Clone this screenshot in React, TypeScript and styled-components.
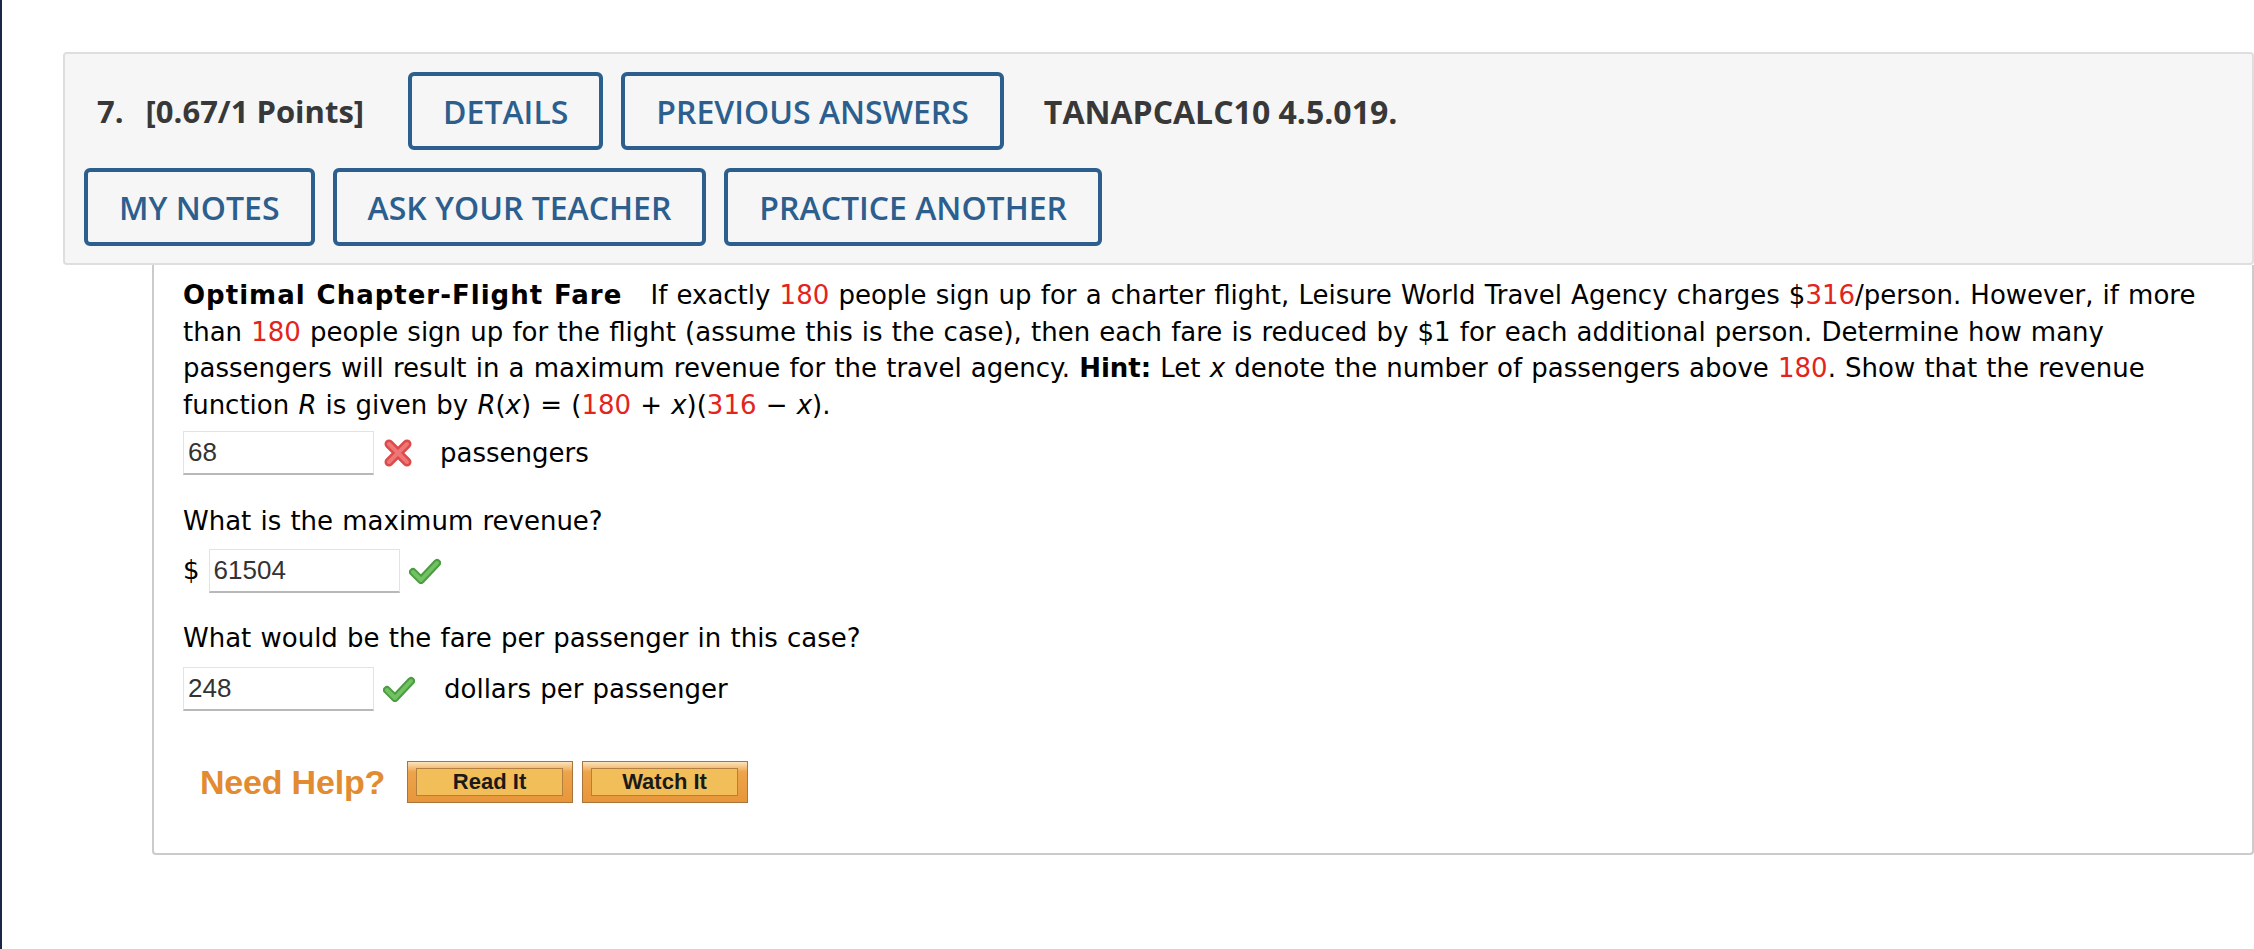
import React from 'react';
import styled, { createGlobalStyle } from 'styled-components';

const GlobalStyle = createGlobalStyle`
  html, body {
    margin: 0;
    padding: 0;
    background: #ffffff;
  }
  * {
    box-sizing: border-box;
  }
`;

const Page = styled.div`
  min-height: 949px;
  border-left: 2px solid #1a2747;
  padding-top: 52px;
  font-family: Verdana, "DejaVu Sans", sans-serif;
`;

const Header = styled.div`
  margin-left: 61px;
  background: #f6f6f6;
  border: 2px solid #dedede;
  border-radius: 4px;
  padding: 18px 0 17px 19px;
  display: flex;
  flex-direction: column;
  gap: 18px;
  font-family: "Open Sans", "Liberation Sans", sans-serif;
`;

const HeaderRow = styled.div<{ $indent?: number }>`
  display: flex;
  align-items: center;
  gap: 18px;
  padding-left: ${p => p.$indent ?? 0}px;
`;

const Label = styled.span<{ $gapAfter?: number; $gapBefore?: number }>`
  font-size: 31px;
  font-weight: 700;
  color: #383838;
  margin-right: ${p => p.$gapAfter ?? 0}px;
  margin-left: ${p => p.$gapBefore ?? 0}px;
  white-space: nowrap;
`;

const Wide = styled.span`
  font-size: 32px;
`;

const Number = styled.span`
  margin-right: 22px;
`;

const OutlineButton = styled.button`
  height: 78px;
  padding: 0 31px;
  background: #f6f6f6;
  border: 4px solid #2c5f8e;
  border-radius: 6px;
  color: #2c5f8e;
  font-family: "Open Sans", "Liberation Sans", sans-serif;
  font-size: 32px;
  font-weight: 600;
  white-space: nowrap;
  display: flex;
  align-items: center;
  justify-content: center;
`;

const Body = styled.div`
  margin-left: 150px;
  border: 2px solid #cbcbcb;
  border-top: none;
  border-radius: 0 0 4px 4px;
  padding: 12px 20px 50px 29px;
  font-size: 26px;
  word-spacing: 0.9px;
  line-height: 36.5px;
  color: #000;
`;

const Para = styled.p`
  margin: 0;
  white-space: nowrap;
`;

const Title = styled.b`
  letter-spacing: 1px;
  margin-right: 19px;
`;

const Red = styled.span`
  color: #e3241c;
`;

const Question = styled.p<{ $top: number }>`
  margin: ${p => p.$top}px 0 0 0;
`;

const AnswerRow = styled.div<{ $top: number }>`
  display: flex;
  align-items: center;
  margin-top: ${p => p.$top}px;
`;

const Field = styled.div`
  width: 191px;
  height: 44px;
  border: 1px solid #e3e3e3;
  border-bottom: 2px solid #b8b8b8;
  background: #fff;
  padding: 0 0 0 4px;
  display: flex;
  align-items: center;
  font-family: "Liberation Sans", Arial, sans-serif;
  font-size: 26px;
  word-spacing: 0;
  color: #333;
`;

const Dollar = styled.span`
  margin-right: 9px;
`;

const Mark = styled.span<{ $left: number }>`
  display: flex;
  margin-left: ${p => p.$left}px;
`;

const Unit = styled.span<{ $left: number }>`
  margin-left: ${p => p.$left}px;
`;

const HelpRow = styled.div`
  display: flex;
  align-items: center;
  margin-top: 50px;
  padding-left: 17px;
`;

const HelpLabel = styled.span`
  font-family: "Liberation Sans", Arial, sans-serif;
  font-size: 34px;
  font-weight: 700;
  word-spacing: 0;
  color: #e28b30;
  margin-right: 22px;
  letter-spacing: -0.2px;
`;

const HelpButton = styled.div`
  width: 166px;
  height: 42px;
  margin-right: 9px;
  border: 1px solid #a9743c;
  background: linear-gradient(#fbe3bd 0%, #eda44a 25%, #e8963a 100%);
  padding: 6px 9px 6px 8px;
`;

const HelpFace = styled.div`
  height: 100%;
  background: #f2be5a;
  border: 1px solid #b4803f;
  display: flex;
  align-items: center;
  justify-content: center;
  font-family: "Liberation Sans", Arial, sans-serif;
  font-size: 22px;
  font-weight: 700;
  word-spacing: 0;
  color: #1a1a1a;
`;

const WrongIcon = () => (
  <svg width="28" height="28" viewBox="0 0 28 28">
    <path d="M5 5 L23 23 M23 5 L5 23" stroke="#dc4a4a" strokeWidth="9" strokeLinecap="round" />
    <path d="M5 5 L23 23 M23 5 L5 23" stroke="#ee7676" strokeWidth="4" strokeLinecap="round" />
  </svg>
);

const RightIcon = () => (
  <svg width="32" height="26" viewBox="0 0 32 26">
    <path d="M4 14 L12 22 L28 5" fill="none" stroke="#4c9c42" strokeWidth="8" strokeLinecap="round" strokeLinejoin="round" />
    <path d="M4 14 L12 22 L28 5" fill="none" stroke="#72c264" strokeWidth="4" strokeLinecap="round" strokeLinejoin="round" />
  </svg>
);

export default function App() {
  return (
    <>
      <GlobalStyle />
      <Page>
        <Header>
          <HeaderRow $indent={13}>
            <Label $gapAfter={26}>
              <Number>7.</Number>[0.67/1 Points]
            </Label>
            <OutlineButton>DETAILS</OutlineButton>
            <OutlineButton>PREVIOUS ANSWERS</OutlineButton>
            <Label $gapBefore={22}><Wide>TANAPCALC10 4.5.019.</Wide></Label>
          </HeaderRow>
          <HeaderRow>
            <OutlineButton>MY NOTES</OutlineButton>
            <OutlineButton>ASK YOUR TEACHER</OutlineButton>
            <OutlineButton>PRACTICE ANOTHER</OutlineButton>
          </HeaderRow>
        </Header>

        <Body>
          <Para>
            <Title>Optimal Chapter-Flight Fare</Title> If exactly <Red>180</Red> people sign up for a charter flight,
            Leisure World Travel Agency charges $<Red>316</Red>/person. However, if more
            <br />
            than <Red>180</Red> people sign up for the flight (assume this is the case), then each fare is reduced by
            $1 for each additional person. Determine how many
            <br />
            passengers will result in a maximum revenue for the travel agency. <b>Hint:</b> Let <i>x</i> denote the
            number of passengers above <Red>180</Red>. Show that the revenue
            <br />
            function <i>R</i> is given by <i>R</i>(<i>x</i>) = (<Red>180</Red> + <i>x</i>)(<Red>316</Red> − <i>x</i>).
          </Para>

          <AnswerRow $top={8}>
            <Field>68</Field>
            <Mark $left={10}><WrongIcon /></Mark>
            <Unit $left={28}>passengers</Unit>
          </AnswerRow>

          <Question $top={28}>What is the maximum revenue?</Question>
          <AnswerRow $top={9}>
            <Dollar>$</Dollar>
            <Field>61504</Field>
            <Mark $left={9}><RightIcon /></Mark>
          </AnswerRow>

          <Question $top={27}>What would be the fare per passenger in this case?</Question>
          <AnswerRow $top={11}>
            <Field>248</Field>
            <Mark $left={9}><RightIcon /></Mark>
            <Unit $left={29}>dollars per passenger</Unit>
          </AnswerRow>

          <HelpRow>
            <HelpLabel>Need Help?</HelpLabel>
            <HelpButton><HelpFace>Read It</HelpFace></HelpButton>
            <HelpButton><HelpFace>Watch It</HelpFace></HelpButton>
          </HelpRow>
        </Body>
      </Page>
    </>
  );
}
